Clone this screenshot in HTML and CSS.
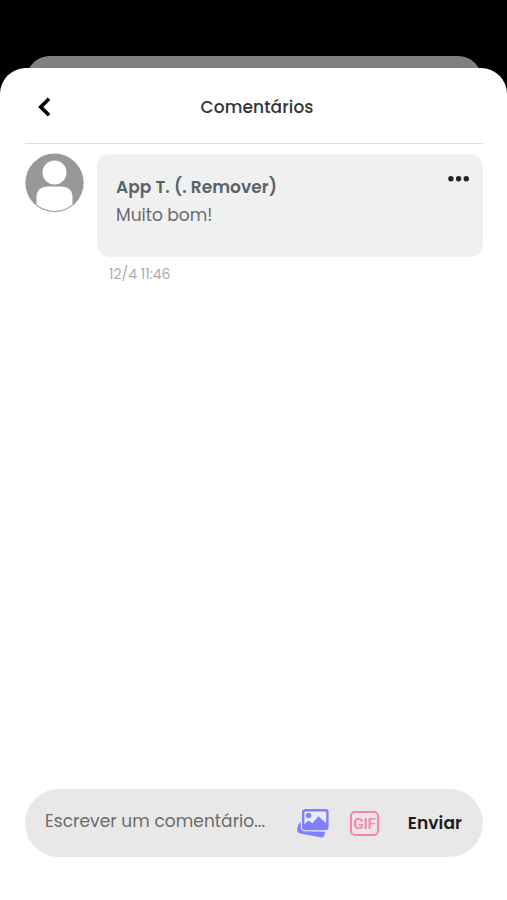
FILE: index.html
```html
<!DOCTYPE html>
<html lang="pt">

<head>
    <meta charset="UTF-8">
    <title>Comentários</title>
    <link rel="stylesheet" href="styles.css">
</head>

<body>
    <div class="screen">
        <div class="back-sheet"></div>
        <div class="sheet">
            <header class="header">
                <svg class="back" viewBox="0 0 13 20" width="13" height="20"><path d="M11 1.7L2.8 10l8.2 8.3" fill="none" stroke="#000" stroke-width="3.7"/></svg>
                <h1 class="title">Comentários</h1>
            </header>
            <div class="comment">
                <svg class="avatar" viewBox="0 0 59 59" width="59" height="59">
                    <circle cx="29.5" cy="29.8" r="29.2" fill="#989898"/>
                    <circle cx="29.5" cy="19.4" r="12" fill="#fff"/>
                    <path d="M11.5 51.5V44C11.5 37.5 16 33.5 23 33.5H36C43 33.5 47.5 37.5 47.5 44V51.5A28.4 28.4 0 0 1 11.5 51.5Z" fill="#fff"/>
                </svg>
                <div class="content">
                    <div class="bubble">
                        <div class="message">
                            <div class="name">App T. (. Remover)</div>
                            <div class="text">Muito bom!</div>
                        </div>
                        <svg class="more" viewBox="0 0 22 6" width="22" height="6" fill="#222">
                            <circle cx="2.9" cy="2.8" r="2.7"/>
                            <circle cx="10.6" cy="2.8" r="2.7"/>
                            <circle cx="18.3" cy="2.8" r="2.7"/>
                        </svg>
                    </div>
                    <div class="date">12/4 11:46</div>
                </div>
            </div>
            <div class="composer">
                <div class="field">Escrever um comentário...</div>
                <svg class="photo" viewBox="0 0 32 30" width="32" height="30">
                    <path d="M3.6 14L3.8 19.5Q4 22.8 7.5 23.2L28.300 23.800L27.200 27.800Q26.600 29.700 24.400 29.400L3.200 25.600Q-.2 24.800 .2 21Q.8 16 3.6 14Z" fill="#807fff"/>
                    <rect x="6.2" y="2.2" width="24.2" height="18.8" rx="2" fill="#eaeafa" stroke="#807fff" stroke-width="2.4"/>
                    <circle cx="11.6" cy="7.400" r="2.7" fill="#807fff"/>
                    <path d="M7 16.500L11.400 12.600L15.400 15.200L21.400 8.300L30 16V20.500H7Z" fill="#807fff"/>
                </svg>
                <div class="gif"><span class="gif-label">GIF</span></div>
                <div class="send">Enviar</div>
            </div>
        </div>
    </div>
</body>

</html>
```

FILE: styles.css
```css
* {
    box-sizing: border-box;
}

body {
    margin: 0;
    background: #000;
    font-family: Poppins, Inter, "Liberation Sans", sans-serif;
}

.screen {
    display: flex;
    flex-direction: column;
    height: 900px;
    padding-top: 56px;
    overflow: hidden;
}

.back-sheet {
    flex: none;
    height: 44px;
    margin: 0 25px -32px 26px;
    border-radius: 24px 24px 0 0;
    background: #808080;
}

/* z-index keeps the sheet above the one behind it */
.sheet {
    position: relative;
    z-index: 1;
    display: flex;
    flex: 1;
    flex-direction: column;
    padding: 0 24px 43px 25px;
    border-radius: 26px 26px 0 0;
    background: #fff;
}

.header {
    display: grid;
    grid-template-columns: 50px 1fr 44px;
    align-items: center;
    height: 76px;
    padding-top: 2px;
    border-bottom: 1px solid #dedede;
}

.back {
    margin-left: 13px;
}

.title {
    margin: 0;
    color: #333;
    font-size: 17px;
    font-weight: 500;
    letter-spacing: .1px;
    line-height: 24px;
    text-align: center;
}

.comment {
    display: flex;
    gap: 13px;
    padding-top: 10px;
}

.avatar {
    flex: none;
    margin-top: -1px;
}

.content {
    flex: 1;
}

.bubble {
    display: flex;
    justify-content: space-between;
    height: 103px;
    padding: 20px 13px 0 19px;
    border-radius: 13px;
    background: #f0f0f0;
}

.name {
    color: #5a6468;
    font-size: 17px;
    font-weight: 600;
    letter-spacing: .05px;
    line-height: 27px;
}

.text {
    padding-top: 1px;
    color: #666b6e;
    font-size: 17px;
    line-height: 27px;
}

.more {
    margin-top: 2px;
}

.date {
    padding: 7px 0 0 12px;
    color: #a9adb0;
    font-size: 14px;
    line-height: 20px;
}

.composer {
    display: flex;
    align-items: center;
    height: 68px;
    margin-top: auto;
    padding: 0 21px 0 20px;
    border-radius: 34px;
    background: #e8e8e8;
}

.field {
    width: 252px;
    padding-bottom: 3px;
    color: #6b6b6b;
    font-size: 17px;
    letter-spacing: .06px;
    line-height: 25px;
    white-space: nowrap;
}

.photo {
    flex: none;
}

.gif {
    display: flex;
    align-items: center;
    justify-content: center;
    width: 29px;
    height: 25px;
    margin: 1px 0 0 21px;
    border: 2px solid #f984a5;
    border-radius: 5px;
    color: #f984a5;
}

.gif-label {
    font-family: Roboto, "Liberation Sans", sans-serif;
    font-size: 15.5px;
    font-weight: 500;
    letter-spacing: -.3px;
    line-height: 20px;
}

.send {
    margin-left: auto;
    color: #1c1c1c;
    font-size: 17px;
    font-weight: 600;
    letter-spacing: .1px;
}
```
